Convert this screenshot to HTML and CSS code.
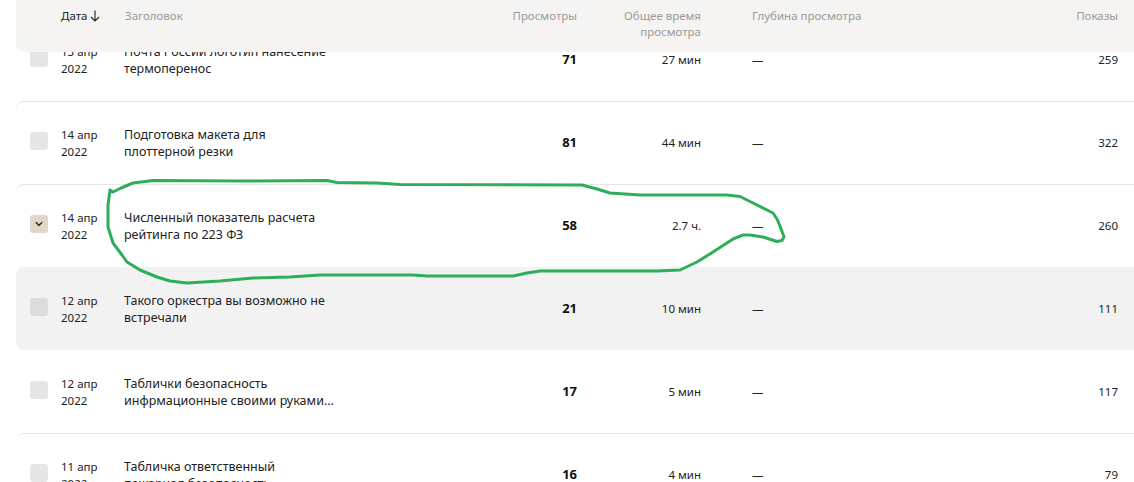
FILE: index.html
```html
<!DOCTYPE html>
<html lang="ru">
<head>
<meta charset="utf-8">
<title>Статистика публикаций</title>
<link rel="stylesheet" href="styles.css">
</head>
<body>
<main class="table">
  <div class="head grid">
    <span></span>
    <span class="date-head">Дата
      <svg class="sort" width="10" height="12" viewBox="0 0 10 12"><path d="M5 .5V11M1 7l4 4 4-4" fill="none" stroke="#222" stroke-width="1.1"/></svg>
    </span>
    <span class="title-head">Заголовок</span>
    <span class="num">Просмотры</span>
    <span class="num">Общее время просмотра</span>
    <span class="depth">Глубина просмотра</span>
    <span class="num">Показы</span>
  </div>

  <div class="row grid">
    <i class="check"></i>
    <span class="date">13 апр 2022</span>
    <span class="title">Почта России логотип нанесение термоперенос</span>
    <b class="num views">71</b>
    <span class="num cell">27 мин</span>
    <span class="depth cell">—</span>
    <span class="num cell">259</span>
  </div>
  <div class="row grid">
    <i class="check"></i>
    <span class="date">14 апр 2022</span>
    <span class="title">Подготовка макета для плоттерной резки</span>
    <b class="num views">81</b>
    <span class="num cell">44 мин</span>
    <span class="depth cell">—</span>
    <span class="num cell">322</span>
  </div>
  <div class="row grid">
    <i class="check checked">
      <svg width="8" height="6" viewBox="0 0 8 6"><path d="M.8 1.200L4 4.400 7.200 1.200" fill="none" stroke="#4a2c12" stroke-width="1.500"/></svg>
    </i>
    <span class="date">14 апр 2022</span>
    <span class="title">Численный показатель расчета рейтинга по 223 ФЗ</span>
    <b class="num views">58</b>
    <span class="num cell">2.7 ч.</span>
    <span class="depth cell">—</span>
    <span class="num cell">260</span>
  </div>
  <div class="row grid hover">
    <i class="check"></i>
    <span class="date">12 апр 2022</span>
    <span class="title">Такого оркестра вы возможно не встречали</span>
    <b class="num views">21</b>
    <span class="num cell">10 мин</span>
    <span class="depth cell">—</span>
    <span class="num cell">111</span>
  </div>
  <div class="row grid plain">
    <i class="check"></i>
    <span class="date">12 апр 2022</span>
    <span class="title">Таблички безопасность инфрмационные своими руками...</span>
    <b class="num views">17</b>
    <span class="num cell">5 мин</span>
    <span class="depth cell">—</span>
    <span class="num cell">117</span>
  </div>
  <div class="row grid">
    <i class="check"></i>
    <span class="date">11 апр 2022</span>
    <span class="title">Табличка ответственный пожарная безопасность</span>
    <b class="num views">16</b>
    <span class="num cell">4 мин</span>
    <span class="depth cell">—</span>
    <span class="num cell">79</span>
  </div>
</main>

<svg class="scribble" width="1134" height="482" viewBox="0 0 1134 482">
  <path d="M110 190L113 192L121 188L133 183L153 180.500L240 181L327 180.500L337 182.500L377 183L400 184.500L582 185L597 189L610 193L640 195L727 195L740 196.500L753 203L773 213L777 219L780 226L784 237L782 240.500L777 241.500L763 237L750 235L743 235L733 239L713 252L697 262L680 270L657 271L540 271L527 273L513 276L427 276L413 275L400 275L320 275L290 277L253 278L220 281L187 283L170 281L157 277L140 270L127 262L122 255L113 243L108 227L108 205L110 190" fill="none" stroke="#2fae5a" stroke-width="3" stroke-linejoin="round" stroke-linecap="round"/>
</svg>
</body>
</html>
```
FILE: styles.css
```css
html, body {
  margin: 0;
  height: 100%;
  overflow: hidden;
  background: #fff;
}

body {
  position: relative;
  font-family: "Noto Sans", "Open Sans", sans-serif;
  font-size: 11.5px;
  line-height: 17px;
  color: #222;
}

.table {
  margin-left: 16px;
}

.grid {
  display: grid;
  grid-template-columns: 18px 76px 380px 73px 124px 297px 120px;
  padding: 0 16px 0 14px;
}

.grid > :nth-child(2) {
  margin-left: 13px;
}

.depth {
  margin-left: 51px;
}

.head {
  position: relative;
  z-index: 1;
  height: 52px;
  margin-bottom: -34px;
  padding-top: 8px;
  box-sizing: border-box;
  background: #f5f4f2;
  border-bottom-left-radius: 8px;
  color: #9a9a9a;
  line-height: 16px;
}

.date-head {
  color: #222;
}

.title-head {
  margin-left: 1px;
}

.sort {
  vertical-align: -2px;
}

.num {
  text-align: right;
}

.row {
  height: 83px;
  box-sizing: border-box;
  align-items: center;
  border-top: 1px solid #e6e6e6;
  border-top-left-radius: 8px;
}

.hover {
  background: #f2f2f2;
  border-top-color: transparent;
  border-radius: 8px 0 0 8px;
}

.plain {
  border-top-color: transparent;
}

.title {
  width: 212px;
  font-size: 12.500px;
}

.date {
  width: 50px;
  margin-bottom: 1px;
}

.cell,
.views {
  margin-bottom: 2px;
}

.views {
  font-size: 13px;
  font-weight: 700;
  color: #111;
}

.check {
  display: flex;
  align-items: center;
  justify-content: center;
  width: 18px;
  height: 18px;
  margin-bottom: 4px;
  border-radius: 3px;
  background: #e6e6e6;
}

.hover .check {
  background: #dcdcdc;
}

.checked {
  background: #e0d6ca;
}

.scribble {
  position: absolute;
  left: 0;
  top: 0;
  z-index: 2;
  pointer-events: none;
}
```
